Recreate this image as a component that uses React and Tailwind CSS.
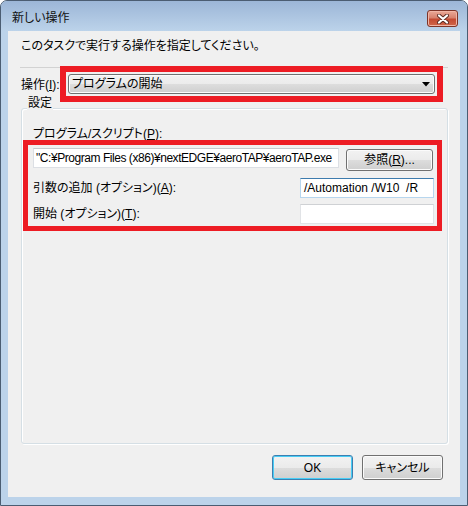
import React from 'react'

const btnBg = "bg-[linear-gradient(#f2f2f2_0%,#ebebeb_50%,#dddddd_50%,#cfcfcf_100%)]"

const Button = ({ children, isDefault }) => (
  <div
    className={
      isDefault
        ? "flex items-center justify-center w-[81px] h-[25px] border border-[#3c7fb1] rounded-[3px] bg-[linear-gradient(#f2f2f2_0%,#ebebeb_50%,#dddddd_50%,#cfcfcf_100%)] shadow-[inset_0_0_0_1px_#48cdf5]"
        : "flex items-center justify-center w-[81px] h-[25px] border border-[#707070] rounded-[3px] bg-[linear-gradient(#f2f2f2_0%,#ebebeb_50%,#dddddd_50%,#cfcfcf_100%)] shadow-[inset_0_0_0_1px_#fbfbfb]"
    }
  >
    {children}
  </div>
)

const App = () => {
  return (
    <div className="w-[468px] h-[506px] flex flex-col bg-[#bcd3ea] border border-[#4b5d72] rounded-t-[7px] overflow-hidden text-[12px] leading-[16px] text-black font-['Liberation_Sans','Noto_Sans_CJK_JP',sans-serif] [font-feature-settings:'palt']">
      {/* title bar */}
      <div className="h-[30px] shrink-0 flex items-start justify-between pl-[11px] pr-[9px] bg-gradient-to-b from-[#9cb6d7] to-[#bcd3ea]">
        <span className="mt-[9px] text-[#111]">新しい操作</span>
        <div className="mt-[9px] w-[31px] h-[17px] flex items-center justify-center border border-[#7d3428] rounded-[3px] bg-[linear-gradient(#eaa998_0%,#d8826e_45%,#c44a32_55%,#d0664a_100%)] shadow-[inset_0_0_0_1px_#f0b5a6]">
          <svg width="12" height="10" viewBox="0 0 12 10">
            <path d="M2 1.5 L10 8.5 M10 1.5 L2 8.5" stroke="#5a2a22" strokeWidth="4" strokeLinecap="round" />
            <path d="M2 1.5 L10 8.5 M10 1.5 L2 8.5" stroke="#ffffff" strokeWidth="2.2" strokeLinecap="round" />
          </svg>
        </div>
      </div>

      {/* client area */}
      <div className="flex-1 mx-[7px] mb-[8px] bg-[#f0f0f0] flex flex-col">
        <p className="pt-[7px] pl-[13px]">このタスクで実行する操作を指定してください。</p>

        {/* action row */}
        <div className="mt-[13px] ml-[12px] w-[428px] border-t border-[#d2d2d2] flex items-start">
          <span className="w-[40px] pl-[1px] mt-[9px] whitespace-nowrap">
            操作(<span className="underline">I</span>):
          </span>
          <div className="-mt-[2px] w-[383px] h-[36px] border-[6px] border-[#ed1c24] pt-[2px] px-[2px]">
            <div className={"h-[20px] flex items-center justify-between pl-[3px] pr-[4px] border border-[#707070] rounded-[3px] shadow-[inset_0_0_0_1px_#fbfbfb] " + btnBg}>
              <span>プログラムの開始</span>
              <svg width="8" height="5" viewBox="0 0 8 5">
                <polygon points="0,0 8,0 4,4.5" fill="#000" />
              </svg>
            </div>
          </div>
        </div>

        {/* group box */}
        <div className="mt-[6px] ml-[13px] w-[427px] h-[336px] border border-[#d5dfe5] rounded-[3px] shadow-[inset_1px_1px_0_#fff,1px_1px_0_#fff] flex flex-col">
          <span className="-mt-[14px] ml-[5px] w-fit px-[1px] bg-[#f0f0f0]">設定</span>
          <span className="mt-[15px] ml-[11px] whitespace-nowrap">
            プログラム/スクリプト(<span className="underline">P</span>):
          </span>

          <div className="-mt-[2px] ml-[1px] w-[419px] h-[91px] border-[5px] border-[#ed1c24] pt-[3px] flex flex-col">
            <div className="flex items-start pl-[5px]">
              <div className="w-[306px] h-[20px] flex items-center pl-[2px] bg-white border border-[#dcdfe4] border-t-[#c6c9ce] overflow-hidden whitespace-nowrap tracking-[-0.45px]">
                "C:¥Program Files (x86)¥nextEDGE¥aeroTAP¥aeroTAP.exe
              </div>
              <div className={"ml-[7px] mt-[1px] w-[87px] h-[22px] flex items-center justify-center border border-[#707070] rounded-[3px] shadow-[inset_0_0_0_1px_#fbfbfb] " + btnBg}>
                参照(<span className="underline">R</span>)...
              </div>
            </div>

            <div className="mt-[7px] flex items-center justify-between pl-[5px] pr-[3px]">
              <span className="whitespace-nowrap">
                引数の追加 (オプション)(<span className="underline">A</span>):
              </span>
              <div className="w-[134px] h-[20px] flex items-center pl-[3px] bg-white border border-[#b7d6ee] border-t-[#3d7bad] whitespace-pre">
                /Automation /W10  /R
              </div>
            </div>

            <div className="mt-[6px] flex items-center justify-between pl-[5px] pr-[3px]">
              <span className="whitespace-nowrap">
                開始 (オプション)(<span className="underline">T</span>):
              </span>
              <div className="w-[134px] h-[20px] bg-white border border-[#e1e3e6] border-t-[#cfd1d4]" />
            </div>
          </div>
        </div>

        {/* buttons */}
        <div className="mt-[11px] flex justify-end gap-[9px] pr-[17px]">
          <Button isDefault>OK</Button>
          <Button>キャンセル</Button>
        </div>
      </div>
    </div>
  )
}

export default App
